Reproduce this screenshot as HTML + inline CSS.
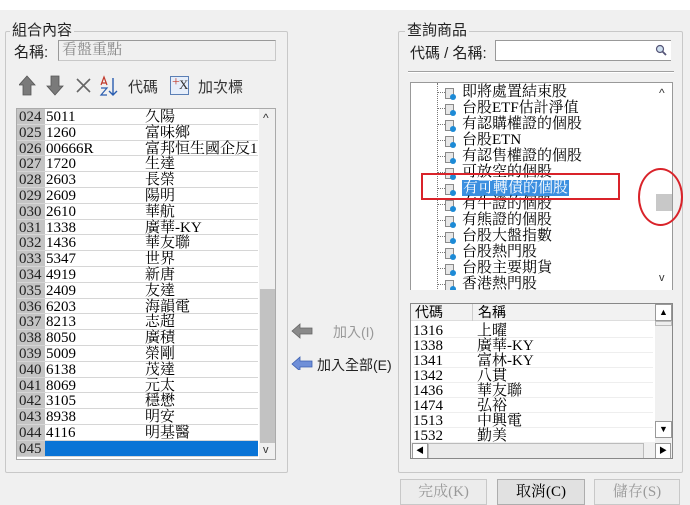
<!DOCTYPE html>
<html><head><meta charset="utf-8"><style>
*{margin:0;padding:0;box-sizing:border-box}
body{width:690px;height:504px;background:#f0f0f0;position:relative;overflow:hidden;font-family:"Liberation Serif","Noto Serif CJK TC",serif;color:#000}
.a{position:absolute}
.sans{font-family:"Liberation Sans","Noto Sans CJK TC",sans-serif}
.grp{position:absolute;border:1px solid #c8c8c8;border-radius:2px}
.lg{position:absolute;background:#f0f0f0;padding:0 2px;font-size:14px;color:#222;line-height:16px}
.row{position:absolute;left:0;height:15.8px;width:241px;border-bottom:1px solid #d6d6d6;font-size:15px;line-height:17px;white-space:nowrap}
.num{position:absolute;left:0;width:28px;height:100%;background:#c4c4c4;padding-left:2px;color:#222}
.code{position:absolute;left:29px}
.nm{position:absolute;left:128px}
.ti{position:absolute;left:0;height:16px;font-size:15px;line-height:17px;white-space:nowrap}
.ti i{position:absolute;left:-17px;top:4px;width:9px;height:11px;border:1px solid #8a8a8a;background:#e8e8e8}
.ti i:after{content:"";position:absolute;right:-3px;bottom:-2px;width:6px;height:6px;border-radius:50%;background:#1c8ad6}
.ti b{position:absolute;left:-25px;top:8px;width:8px;border-top:1px dotted #777}
.btn{position:absolute;top:479px;height:26px;border:1px solid #adadad;background:#e1e1e1;font-size:15px;text-align:center;line-height:24px}
.br{position:absolute;left:0;width:240px;height:15px;font-size:15px;line-height:16px}
</style></head><body>
<div class="a" style="left:0;top:0;width:690px;height:10px;background:#fff"></div>

<!-- left group -->
<div class="grp" style="left:5px;top:31px;width:283px;height:442px"></div>
<div class="lg sans" style="left:10px;top:23px;font-size:15px">組合內容</div>
<div class="a sans" style="left:14px;top:41px;font-size:15px;color:#222">名稱:</div>
<div class="a" style="left:58px;top:40px;width:218px;height:21px;border:1px solid #c8c8c8;border-left-color:#999;border-top-color:#999;background:#f0f0f0;font-size:15px;color:#888;padding-left:3px;line-height:19px">看盤重點</div>

<!-- toolbar -->
<svg class="a" style="left:19px;top:75px" width="110" height="22">
<path d="M8 1 L16 10 L12 10 L12 20 L4 20 L4 10 L0 10 Z" fill="#7a7a7a" stroke="#555" stroke-width="0.8"/>
<path d="M36 20 L44 11 L40 11 L40 1 L32 1 L32 11 L28 11 Z" fill="#7a7a7a" stroke="#555" stroke-width="0.8"/>
<path d="M58 4 L71 17 M71 4 L58 17" stroke="#666" stroke-width="1.6"/>
<path d="M82 10 L85 2 L88 10 M82.5 8 L87.5 8" stroke="#c0392b" stroke-width="1.2" fill="none"/>
<path d="M82 13 L88 13 L82 20 L88 20" stroke="#2a5db0" stroke-width="1.2" fill="none"/>
<path d="M94 3 L94 20 M90 16 L94 20 L98 16" stroke="#2a5db0" stroke-width="1.4" fill="none"/>
</svg>
<div class="a sans" style="left:128px;top:76px;font-size:15px;color:#333">代碼</div>
<div class="a" style="left:170px;top:76px;width:19px;height:19px;border:1px solid #5b7fb5;background:#e6eefa"></div>
<div class="a" style="left:172px;top:75px;font-size:14px;color:#c0392b">+</div>
<div class="a" style="left:179px;top:77px;font-size:13px;color:#333">X</div>
<div class="a sans" style="left:198px;top:76px;font-size:15px;color:#333">加次標</div>

<!-- left list -->
<div class="a" style="left:16px;top:108px;width:260px;height:352px;border:1px solid #aaa;background:#fff;overflow:hidden">
<div class="a" style="left:242px;top:0;width:17px;height:352px;background:#f0f0f0"></div>
<div class="a" style="left:243px;top:180px;width:15px;height:154px;background:#c2c2c2"></div>
<div class="a sans" style="left:246px;top:2px;font-size:12px;color:#333">^</div>
<div class="a sans" style="left:246px;top:335px;font-size:11px;color:#333">v</div>
<div id="rows"></div>
</div>

<!-- middle -->
<svg class="a" style="left:290px;top:322px" width="26" height="48">
<path d="M2 9 L10 2 L10 6 L22 6 L22 12 L10 12 L10 16 Z" fill="#8a8a8a" stroke="#666" stroke-width="0.8"/>
<path d="M2 42 L10 35 L10 39 L22 39 L22 45 L10 45 L10 49 Z" fill="#6f8fd8" stroke="#3b5fb0" stroke-width="0.8"/>
</svg>
<div class="a sans" style="left:333px;top:322px;font-size:14px;color:#999">加入(I)</div>
<div class="a sans" style="left:317px;top:355px;font-size:14px;color:#222">加入全部(E)</div>

<!-- right group -->
<div class="grp" style="left:398px;top:31px;width:285px;height:442px"></div>
<div class="lg sans" style="left:405px;top:23px;font-size:15px">查詢商品</div>
<div class="a sans" style="left:410px;top:42px;font-size:15px;color:#222">代碼 / 名稱:</div>
<div class="a" style="left:495px;top:40px;width:176px;height:21px;border:1px solid #999;border-right:none;background:#fff"></div>
<svg class="a" style="left:655px;top:44px" width="12" height="12"><circle cx="5" cy="5" r="3.5" stroke="#557" fill="#cfe0f0" stroke-width="1.2"/><path d="M7.5 7.5 L11 11" stroke="#557" stroke-width="1.8"/></svg>
<div class="a" style="left:408px;top:71px;width:266px;height:2px;border-top:1px solid #a0a0a0;border-bottom:1px solid #fff"></div>

<!-- tree -->
<div class="a" style="left:410px;top:82px;width:263px;height:208px;border:1px solid #999;border-bottom:none;background:#fff;overflow:hidden">
<div class="a" style="left:26px;top:0;height:208px;border-left:1px dotted #777"></div>
<div class="a sans" style="left:248px;top:3px;font-size:12px;color:#333">^</div>
<div class="a sans" style="left:248px;top:189px;font-size:11px;color:#333">v</div>
<div class="a" style="left:245px;top:111px;width:16px;height:17px;background:#c8c8c8"></div>
<div id="tree" class="a" style="left:51px;top:0"></div>
</div>
<div class="a" style="left:421px;top:173px;width:199px;height:27px;border:2px solid #d9232a"></div>
<div class="a" style="left:638px;top:168px;width:45px;height:58px;border:2px solid #d9232a;border-radius:50%"></div>

<!-- bottom right list -->
<div class="a" style="left:410px;top:303px;width:263px;height:156px;border:1px solid #888;background:#fff;overflow:hidden">
<div class="a" style="left:0;top:0;width:244px;height:17px;background:#f2f2f2;border-bottom:1px solid #ddd"></div>
<div class="a" style="left:61px;top:0;height:17px;border-left:1px solid #ccc"></div>
<div class="a sans" style="left:4px;top:0;font-size:14px;line-height:17px">代碼</div>
<div class="a sans" style="left:67px;top:0;font-size:14px;line-height:17px">名稱</div>
<div id="blist" class="a" style="left:2px;top:19px"></div>
<div class="a" style="left:244px;top:0;width:18px;height:138px;background:#f0f0f0"></div>
<div class="a" style="left:244px;top:0;width:17px;height:17px;border:1px solid #999;background:#fff;font-size:9px;text-align:center;line-height:15px">▲</div>
<div class="a" style="left:244px;top:17px;width:17px;height:5px;border:1px solid #bbb;background:#eee"></div>
<div class="a" style="left:244px;top:117px;width:17px;height:17px;border:1px solid #999;background:#fff;font-size:9px;text-align:center;line-height:15px">▼</div>
<div class="a" style="left:0;top:138px;width:262px;height:18px;background:#f0f0f0"></div>
<div class="a" style="left:1px;top:139px;width:16px;height:16px;border:1px solid #999;background:#fff;font-size:8px;text-align:center;line-height:14px">◀</div>
<div class="a" style="left:17px;top:139px;width:216px;height:16px;border:1px solid #bbb;background:#eaeaea"></div>
<div class="a" style="left:244px;top:139px;width:16px;height:16px;border:1px solid #999;background:#fff;font-size:8px;text-align:center;line-height:14px">▶</div>
</div>

<div class="btn" style="left:400px;width:87px;color:#999;background:#ececec;border-color:#c8c8c8">完成(K)</div>
<div class="btn" style="left:497px;width:88px">取消(C)</div>
<div class="btn" style="left:594px;width:86px;color:#999;background:#ececec;border-color:#c8c8c8">儲存(S)</div>

<script>
var L=[["024","5011","久陽"],["025","1260","富味鄉"],["026","00666R","富邦恒生國企反1"],["027","1720","生達"],["028","2603","長榮"],["029","2609","陽明"],["030","2610","華航"],["031","1338","廣華-KY"],["032","1436","華友聯"],["033","5347","世界"],["034","4919","新唐"],["035","2409","友達"],["036","6203","海韻電"],["037","8213","志超"],["038","8050","廣積"],["039","5009","榮剛"],["040","6138","茂達"],["041","8069","元太"],["042","3105","穩懋"],["043","8938","明安"],["044","4116","明基醫"],["045","",""]];
var h="";L.forEach(function(r,i){var sel=i==21;h+='<div class="row" style="top:'+(i*15.8)+'px;'+(sel?'background:#0a74d6;':'')+'"><div class="num">'+r[0]+'</div><div class="code">'+r[1]+'</div><div class="nm">'+r[2]+'</div></div>'});
document.getElementById("rows").innerHTML=h;
var T=["即將處置結束股","台股ETF估計淨值","有認購權證的個股","台股ETN","有認售權證的個股","可放空的個股","有可轉債的個股","有牛證的個股","有熊證的個股","台股大盤指數","台股熱門股","台股主要期貨","香港熱門股"];
h="";T.forEach(function(t,i){var s=i==6;h+='<div class="ti" style="top:'+(i*16+1)+'px"><b></b><i></i><span style="'+(s?'background:#3b8fe0;color:#fff;padding:0 1px;':'')+'">'+t+'</span></div>'});
document.getElementById("tree").innerHTML=h;
var B=[["1316","上曜"],["1338","廣華-KY"],["1341","富林-KY"],["1342","八貫"],["1436","華友聯"],["1474","弘裕"],["1513","中興電"],["1532","勤美"]];
h="";B.forEach(function(r,i){h+='<div class="br" style="top:'+(i*15)+'px;border-bottom:1px solid #eee"><span class="a" style="left:0">'+r[0]+'</span><span class="a" style="left:64px">'+r[1]+'</span></div>'});
document.getElementById("blist").innerHTML=h;
</script>
</body></html>
